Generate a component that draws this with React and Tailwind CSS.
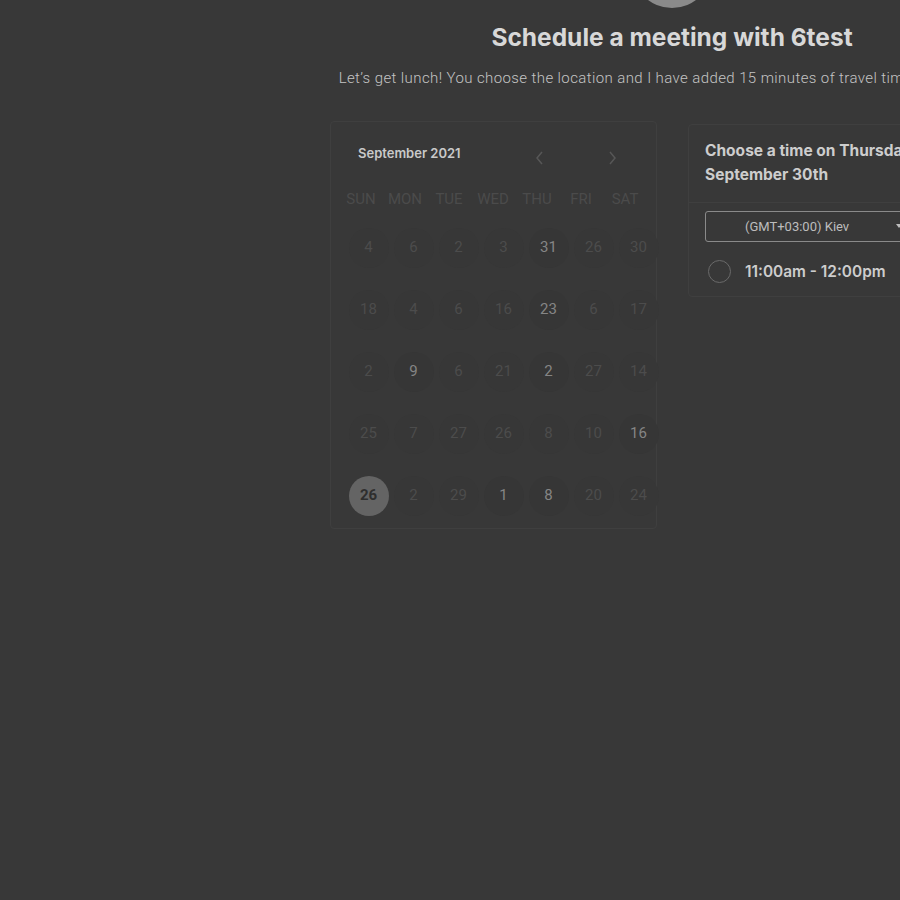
import React from 'react';

const weekdays = ['SUN', 'MON', 'TUE', 'WED', 'THU', 'FRI', 'SAT'];

// [label, mode] — mode: true = available day, 'sel' = selected day
const weeks = [
  [['4'], ['6'], ['2'], ['3'], ['31', true], ['26'], ['30']],
  [['18'], ['4'], ['6'], ['16'], ['23', true], ['6'], ['17']],
  [['2'], ['9', true], ['6'], ['21'], ['2', true], ['27'], ['14']],
  [['25'], ['7'], ['27'], ['26'], ['8'], ['10'], ['16', true]],
  [['26', 'sel'], ['2'], ['29'], ['1', true], ['8', true], ['20'], ['24']],
];

const DayCell = ({ label, mode }) => {
  if (mode === 'sel') {
    return (
      <div className="flex items-center justify-center">
        <div className="w-10 h-10 rounded-full bg-[#646464] flex items-center justify-center text-[15px] font-bold text-[#2e2e2e]">
          {label}
        </div>
      </div>
    );
  }
  return (
    <div className="flex items-center justify-center">
      <div
        className={
          mode
            ? 'w-10 h-10 rounded-full bg-[#363636] flex items-center justify-center text-[15px] text-[#858585]'
            : 'w-10 h-10 rounded-full bg-[#373737] flex items-center justify-center text-[15px] text-[#4c4c4c]'
        }
      >
        {label}
      </div>
    </div>
  );
};

const Calendar = () => (
  <div className="w-[327px] h-[408px] border border-[#3f3f3f] rounded-sm bg-[#383838] pt-[22px]">
    <div className="flex items-center h-[20px] pl-[27px]">
      <span className="text-[13px] font-semibold text-[#c9c9c9] font-['Inter',sans-serif]">
        September 2021
      </span>
      <svg className="ml-[74px] mt-[8px]" width="10" height="14" viewBox="0 0 10 14" fill="none" stroke="#575757" strokeWidth="1.5">
        <path d="M7 1 L2 7 L7 13" />
      </svg>
      <svg className="ml-[62px] mt-[8px]" width="10" height="14" viewBox="0 0 10 14" fill="none" stroke="#575757" strokeWidth="1.5">
        <path d="M3 1 L8 7 L3 13" />
      </svg>
    </div>
    <div className="grid grid-cols-7 w-[308px] ml-[8px] mt-[24px] text-[15px] text-[#4b4b4b] font-['Roboto',sans-serif]">
      {weekdays.map((d) => (
        <div key={d} className="text-center">{d}</div>
      ))}
    </div>
    <div className="flex flex-col gap-[22px] mt-[17px] w-[315px] ml-[15px] font-['Roboto',sans-serif]">
      {weeks.map((w, i) => (
        <div key={i} className="grid grid-cols-7">
          {w.map(([label, mode], j) => (
            <DayCell key={j} label={label} mode={mode} />
          ))}
        </div>
      ))}
    </div>
  </div>
);

const TimePanel = () => (
  <div className="w-[326px] mt-[3px] border border-[#3f3f3f] rounded-sm bg-[#383838] self-start font-['Inter',sans-serif]">
    <div className="px-4 pt-[14px] pb-[15px] text-[15.5px] font-bold leading-[24px] text-[#cdcdcd] whitespace-nowrap">
      Choose a time on Thursday,
      <br />
      September 30th
    </div>
    <div className="border-t border-[#3f3f3f] px-4 pt-2 pb-[13px]">
      <div className="relative h-[31px] border border-[#8a8a8a] rounded-[3px] flex items-center pl-[39px] text-[13px] text-[#bdbdbd] font-['Roboto',sans-serif]">
        (GMT+03:00) Kiev
        <span className="absolute left-[190px] top-[12px] w-0 h-0 border-l-[3px] border-r-[3px] border-t-[4px] border-l-transparent border-r-transparent border-t-[#bdbdbd]" />
      </div>
      <div className="flex items-center mt-[18px]">
        <div className="w-[23px] h-[23px] rounded-full border-[1.5px] border-[#6a6a6a] ml-[3px]" />
        <span className="ml-[14px] text-[15.4px] font-semibold text-[#cdcdcd]">11:00am - 12:00pm</span>
      </div>
    </div>
  </div>
);

export default function App() {
  return (
    <div className="min-h-[900px] w-full bg-[#383838] overflow-hidden">
      <div className="w-[1344px] flex flex-col items-center">
        <div className="w-20 h-20 rounded-full bg-[#8a8a8a] -mt-[72px]" />
        <h1 className="mt-[14px] text-[24.5px] font-bold text-[#d8d8d8] font-['Inter',sans-serif] leading-[30px]">
          Schedule a meeting with 6test
        </h1>
        <p className="mt-[16px] text-[15px] font-light tracking-[0.4px] text-[#c4c4c4] font-['Roboto',sans-serif] leading-[20px] whitespace-nowrap">
          Let’s get lunch! You choose the location and I have added 15 minutes of travel time to the venue.
        </p>
        <div className="flex gap-[31px] mt-[33px]">
          <Calendar />
          <TimePanel />
        </div>
      </div>
    </div>
  );
}
